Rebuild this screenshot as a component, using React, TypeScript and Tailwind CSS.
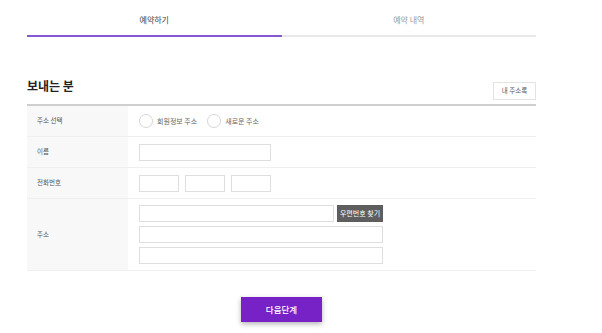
const font = { fontFamily: '"Noto Sans CJK KR", "Noto Sans", sans-serif' };

function Field({ className }: { className: string }) {
  return <div className={`h-[17px] border border-[#dedede] bg-white ${className}`} />;
}

function Radio({ label }: { label: string }) {
  return (
    <label className="flex items-center gap-[4px]">
      <span className="w-[14px] h-[14px] rounded-full border border-[#d6d6d6] bg-white" />
      <span className="text-[7px] text-[#666]">{label}</span>
    </label>
  );
}

function Row({
  label,
  className,
  children,
}: {
  label: string;
  className: string;
  children: React.ReactNode;
}) {
  return (
    <div className="flex border-b border-[#efefef]">
      <div className="w-[101px] shrink-0 bg-[#f8f8f8] pl-[10px] flex items-center text-[6.5px] text-[#555]">
        {label}
      </div>
      <div className={`flex-1 pl-[11px] ${className}`}>{children}</div>
    </div>
  );
}

export default function App() {
  return (
    <div className="w-[602px] h-[333px] bg-white overflow-hidden" style={font}>
      <div className="ml-[27px] w-[509px]">
        <div className="flex">
          <div className="flex-1 pt-[14px] pb-[9px] border-b-2 border-[#8559d3] text-center text-[8px] leading-[12px] text-[#444]">
            예약하기
          </div>
          <div className="flex-1 pt-[14px] pb-[9px] border-b-2 border-[#e8e8e8] text-center text-[8px] leading-[12px] text-[#999]">
            예약 내역
          </div>
        </div>

        <div className="mt-[42px] mb-[4px] flex items-end justify-between">
          <h2 className="mb-[7px] text-[12px] leading-[14px] font-bold text-[#222]">보내는 분</h2>
          <button className="w-[43px] h-[18px] border border-[#e3e3e3] bg-white text-[6.5px] text-[#555]">
            내 주소록
          </button>
        </div>

        <div className="border-t-2 border-[#cfcfcf]">
          <Row label="주소 선택" className="h-[30px] flex items-center gap-[10px]">
            <Radio label="회원정보 주소" />
            <Radio label="새로운 주소" />
          </Row>
          <Row label="이름" className="h-[30px] flex items-center">
            <Field className="w-[132px]" />
          </Row>
          <Row label="전화번호" className="h-[30px] flex items-center gap-[6px]">
            <Field className="w-[40px]" />
            <Field className="w-[40px]" />
            <Field className="w-[40px]" />
          </Row>
          <Row label="주소" className="pt-[6px] pb-[6px] flex flex-col gap-[4px]">
            <div className="flex gap-[3px]">
              <Field className="w-[195px]" />
              <button className="w-[46px] h-[17px] bg-[#5e5e5e] text-white text-[7px] leading-[17px]">
                우편번호 찾기
              </button>
            </div>
            <Field className="w-[244px]" />
            <Field className="w-[244px]" />
          </Row>
        </div>

        <div className="mt-[26px] flex justify-center">
          <button className="w-[81px] h-[25px] bg-[#7622c6] text-white text-[8.5px] font-medium shadow-[0_2px_5px_rgba(0,0,0,0.3)]">
            다음단계
          </button>
        </div>
      </div>
    </div>
  );
}
